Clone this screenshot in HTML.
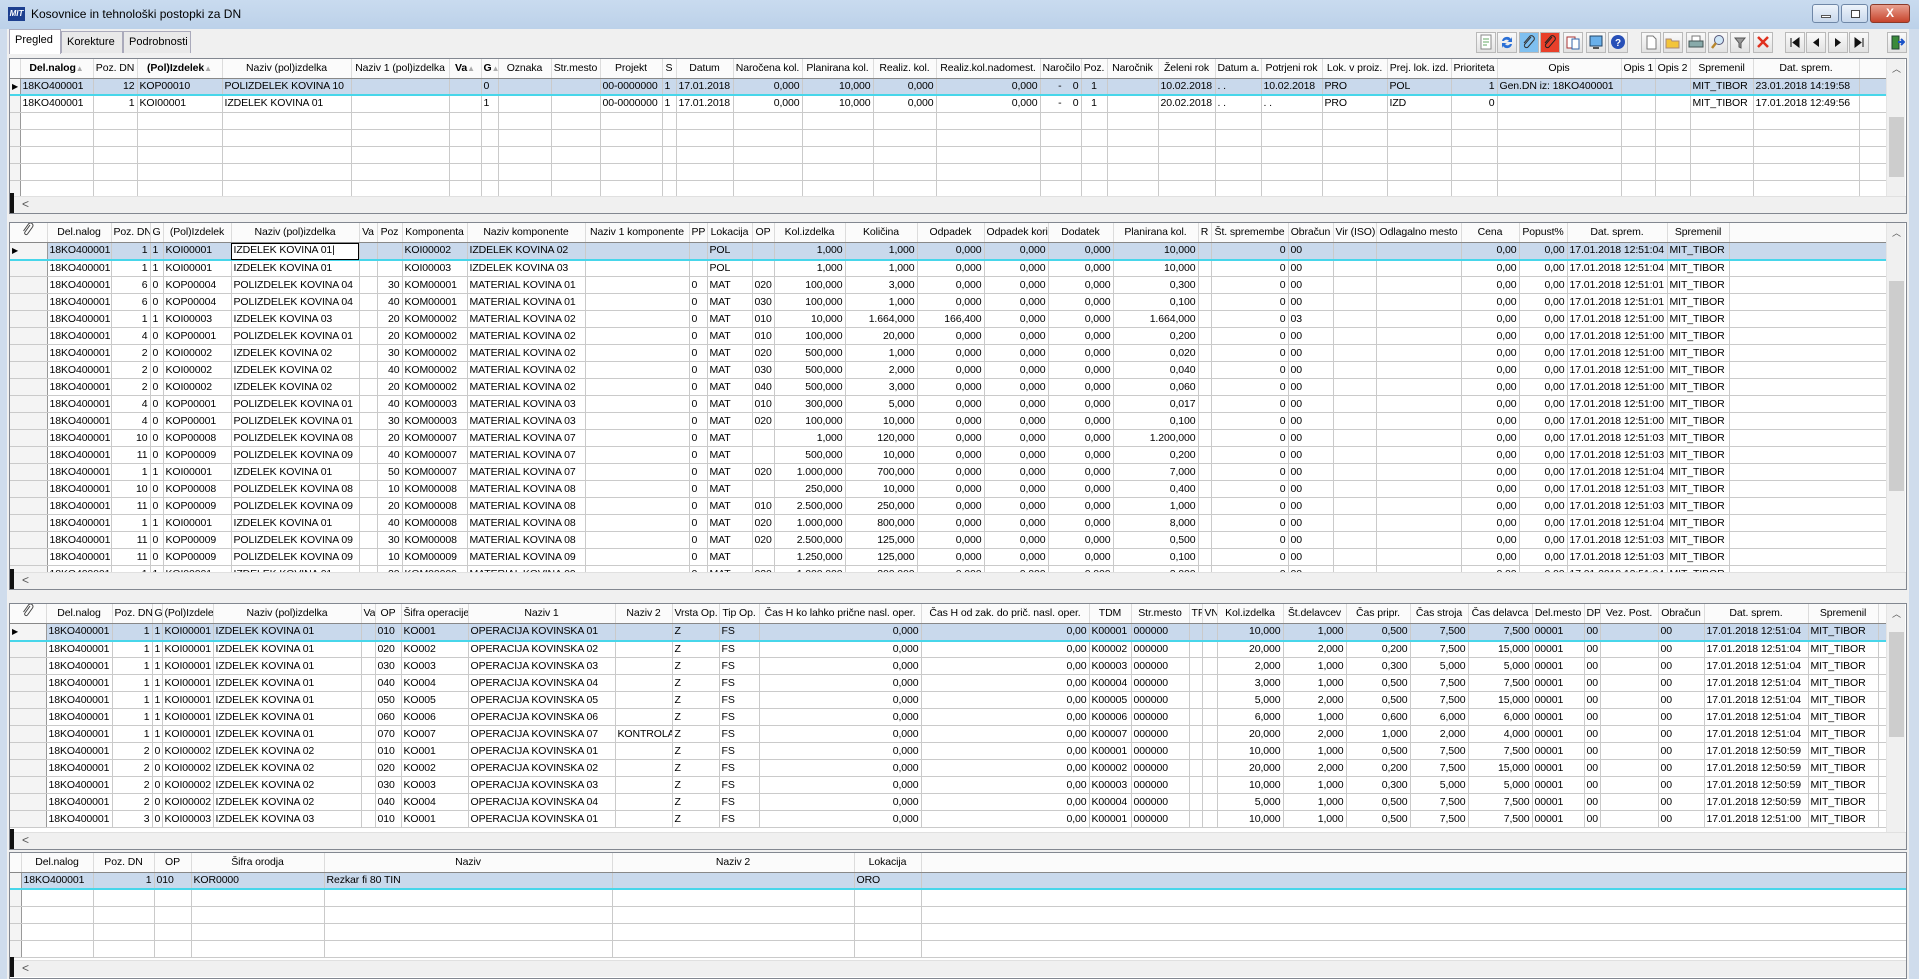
<!DOCTYPE html>
<html><head><meta charset="utf-8">
<style>
*{box-sizing:border-box}
body{margin:0;width:1919px;height:979px;overflow:hidden;background:#cfdcec;font-family:"Liberation Sans",sans-serif;position:relative}
.title{position:absolute;left:0;top:0;width:1919px;height:29px;background:linear-gradient(#c9dbef,#bcd1e9);}
.title .t{position:absolute;left:31px;top:7px;font-size:12px;color:#000}
.logo{position:absolute;left:8px;top:7px;width:17px;height:14px;background:#1d3f8f;color:#fff;font:bold 8px "Liberation Sans";line-height:14px;text-align:center;font-style:italic}
.wb{position:absolute;top:4px;height:19px;border:1px solid #6f87a7;border-radius:3px;background:linear-gradient(#eef4fb,#c8d8ec)}
.client{position:absolute;left:7px;top:29px;width:1902px;height:950px;background:#f0f0f0}
.tab{position:absolute;top:31px;height:22px;font-size:11px;padding:4px 5px;border:1px solid #aab;border-bottom:none;background:#e9e9e9}
.tab.a{background:#fff;top:29px;height:25px}
.tb{position:absolute;top:32px;width:20px;height:21px;border:1px solid #b9b9b9;background:linear-gradient(#fafafa,#e2e2e2)}
.tb svg{position:absolute;left:1px;top:1px}
.g{position:absolute;background:#fff;border:1px solid #828790;overflow:hidden}
table{border-collapse:collapse;table-layout:fixed;font-size:10.5px;letter-spacing:-0.1px;position:absolute;left:0;top:0}
td,th{height:17px;padding:0 2px;border-right:1px solid #cacaca;border-bottom:1px solid #cacaca;white-space:nowrap;overflow:hidden;line-height:15px;color:#000}
th{height:19px;font-weight:normal;background:#fbfbfb;border-right:1px solid #dcdcdc;border-bottom:1px solid #888;text-align:center}
th b{font-weight:bold}
.tri{color:#aaa;font-size:8px}
tr.s td{background:#c9d9ec;border-bottom:2px solid #47d6ea}
td:first-child{background:#f4f4f4!important;border-right:1px solid #999}
.ed{background:#fff!important;outline:1px solid #000;outline-offset:-1px}
.hs{position:absolute;left:0;height:17px;background:#f0f0f0;border-top:1px solid #e0e0e0;font-size:12px;color:#555;padding-left:12px;line-height:15px}
.hs:before{content:"";position:absolute;left:0;top:-4px;width:4px;height:20px;background:#111}
.vs{position:absolute;width:19px;background:#f0f0f0;border-left:1px solid #e4e4e4}
.vs .th{position:absolute;left:2px;width:15px;background:#cdcdcd}
.vs .ar{position:absolute;top:3px;left:5px;font-size:9px;color:#555}
#t1 td:nth-child(3),#t1 td:nth-child(14),#t1 td:nth-child(15),#t1 td:nth-child(16),#t1 td:nth-child(17),#t1 td:nth-child(18),#t1 td:nth-child(26){text-align:right}
#t1 td:nth-child(19){text-align:center}
#t2 td:nth-child(3),#t2 td:nth-child(8),#t2 td:nth-child(15),#t2 td:nth-child(16),#t2 td:nth-child(17),#t2 td:nth-child(18),#t2 td:nth-child(19),#t2 td:nth-child(20),#t2 td:nth-child(22),#t2 td:nth-child(26),#t2 td:nth-child(27){text-align:right}
#t3 td:nth-child(3),#t3 td:nth-child(14),#t3 td:nth-child(15),#t3 td:nth-child(20),#t3 td:nth-child(21),#t3 td:nth-child(22),#t3 td:nth-child(23),#t3 td:nth-child(24){text-align:right}
#t4 td:nth-child(3){text-align:right}
.mk{font-size:8px}
</style></head><body>
<div class="title"><div class="logo">MIT</div><div class="t">Kosovnice in tehnološki postopki za DN</div>
<div class="wb" style="left:1812px;width:27px"><div style="position:absolute;left:8px;top:10px;width:10px;height:3px;background:#fff;border:1px solid #555"></div></div>
<div class="wb" style="left:1841px;width:27px"><div style="position:absolute;left:9px;top:5px;width:9px;height:8px;border:1px solid #444;background:#fff"></div></div>
<div class="wb" style="left:1870px;width:40px;background:linear-gradient(#e8a090,#c7442c);border-color:#8a3a2a;color:#fff;font:bold 12px 'Liberation Sans';text-align:center;line-height:17px">X</div>
</div>
<div class="client"></div>
<div class="tab a" style="left:9px;width:52px">Pregled</div>
<div class="tab" style="left:61px;width:62px">Korekture</div>
<div class="tab" style="left:123px;width:68px">Podrobnosti</div>

<div class="tb" style="left:1476px"><svg width="16" height="17"><rect x="3" y="1" width="10" height="14" fill="#fff" stroke="#888"/><path d="M5 5h6M5 8h6M5 11h4" stroke="#6a6"/></svg></div>
<div class="tb" style="left:1497px"><svg width="16" height="17"><path d="M3 7a5 5 0 0 1 9-2l1-2v5h-5l2-1a3 3 0 0 0-5 0z" fill="#2a6fd6"/><path d="M13 10a5 5 0 0 1-9 2l-1 2v-5h5l-2 1a3 3 0 0 0 5 0z" fill="#2a6fd6"/></svg></div>
<div class="tb" style="left:1519px;background:#7fc0f0"><svg width="16" height="17"><path d="M10 3l-6 7a2 2 0 0 0 3 3l6-7a3 3 0 0 0-4-4l-6 7" stroke="#333" fill="none"/></svg></div>
<div class="tb" style="left:1540px;background:#e8402a"><svg width="16" height="17"><path d="M10 3l-6 7a2 2 0 0 0 3 3l6-7a3 3 0 0 0-4-4l-6 7" stroke="#222" fill="none"/></svg></div>
<div class="tb" style="left:1563px"><svg width="16" height="17"><rect x="2" y="3" width="8" height="11" fill="#fff" stroke="#a33"/><rect x="7" y="5" width="7" height="10" fill="#fff" stroke="#36a"/></svg></div>
<div class="tb" style="left:1586px"><svg width="16" height="17"><rect x="2" y="2" width="12" height="10" fill="#6ab0ea" stroke="#246"/><rect x="5" y="13" width="6" height="2" fill="#555"/></svg></div>
<div class="tb" style="left:1608px"><svg width="16" height="17"><circle cx="8" cy="8" r="7" fill="#2850b8"/><text x="5" y="12" fill="#fff" font-size="10" font-weight="bold" font-family="Liberation Sans">?</text></svg></div>
<div class="tb" style="left:1641px"><svg width="16" height="17"><path d="M4 2h6l3 3v10H4z" fill="#fff" stroke="#777"/></svg></div>
<div class="tb" style="left:1663px"><svg width="16" height="17"><path d="M1 5h5l1 2h7v7H1z" fill="#f2c43a" stroke="#a87"/></svg></div>
<div class="tb" style="left:1686px"><svg width="16" height="17"><rect x="4" y="2" width="8" height="5" fill="#fff" stroke="#777"/><rect x="1" y="7" width="14" height="6" fill="#8aa" stroke="#455"/></svg></div>
<div class="tb" style="left:1708px"><svg width="16" height="17"><circle cx="9" cy="6" r="4.5" fill="#cfe6f7" stroke="#557"/><path d="M6 9l-4 5" stroke="#b8862b" stroke-width="2.5"/></svg></div>
<div class="tb" style="left:1730px"><svg width="16" height="17"><path d="M3 4h10l-4 5v5l-2-1V9z" fill="#999" stroke="#555"/></svg></div>
<div class="tb" style="left:1753px"><svg width="16" height="17"><path d="M3 3l10 10M13 3L3 13" stroke="#e0301e" stroke-width="2.5"/></svg></div>
<div class="tb" style="left:1785px"><svg width="16" height="17"><path d="M4 4v9M12 4v9L6 8.5z" stroke="#111" fill="#111"/></svg></div>
<div class="tb" style="left:1806px"><svg width="16" height="17"><path d="M11 4v9L5 8.5z" fill="#111"/></svg></div>
<div class="tb" style="left:1828px"><svg width="16" height="17"><path d="M5 4v9l6-4.5z" fill="#111"/></svg></div>
<div class="tb" style="left:1849px"><svg width="16" height="17"><path d="M4 4v9l6-4.5zM12 4v9" stroke="#111" fill="#111"/></svg></div>
<div class="tb" style="left:1887px"><svg width="16" height="17"><rect x="3" y="2" width="7" height="13" fill="#3a8a3a" stroke="#243"/><path d="M9 8h6M12 5l3 3-3 3" stroke="#1a52c8" stroke-width="2" fill="none"/></svg></div>

<!-- GRID 1 -->
<div class="g" style="left:9px;top:58px;width:1898px;height:156px">
<table id="t1" style="width:1876px">
<colgroup><col style="width:10px"><col style="width:73px"><col style="width:44px"><col style="width:85px"><col style="width:129px"><col style="width:98px"><col style="width:32px"><col style="width:17px"><col style="width:53px"><col style="width:49px"><col style="width:62px"><col style="width:14px"><col style="width:57px"><col style="width:69px"><col style="width:71px"><col style="width:63px"><col style="width:104px"><col style="width:41px"><col style="width:26px"><col style="width:51px"><col style="width:57px"><col style="width:46px"><col style="width:61px"><col style="width:65px"><col style="width:64px"><col style="width:46px"><col style="width:124px"><col style="width:34px"><col style="width:35px"><col style="width:63px"><col style="width:106px"><col style="width:27px"></colgroup>
<tr><th></th><th><b>Del.nalog</b><span class="tri">▲</span></th><th>Poz. DN</th><th><b>(Pol)Izdelek</b><span class="tri">▲</span></th><th>Naziv (pol)izdelka</th><th>Naziv 1 (pol)izdelka</th><th><b>Va</b><span class="tri">▲</span></th><th><b>G</b><span class="tri">▲</span></th><th>Oznaka</th><th>Str.mesto</th><th>Projekt</th><th>S</th><th>Datum</th><th>Naročena kol.</th><th>Planirana kol.</th><th>Realiz. kol.</th><th>Realiz.kol.nadomest.</th><th>Naročilo</th><th>Poz.</th><th>Naročnik</th><th>Želeni rok</th><th>Datum a.</th><th>Potrjeni rok</th><th>Lok. v proiz.</th><th>Prej. lok. izd.</th><th>Prioriteta</th><th>Opis</th><th>Opis 1</th><th>Opis 2</th><th>Spremenil</th><th>Dat. sprem.</th><th></th></tr>
<tr class="s"><td class="mk">▶</td><td>18KO400001<td>12<td>KOP00010<td>POLIZDELEK KOVINA 10<td><td><td>0<td><td><td>00-0000000<td>1<td>17.01.2018<td>0,000<td>10,000<td>0,000<td>0,000<td>-&nbsp;&nbsp;&nbsp;&nbsp;0<td>1<td><td>10.02.2018<td>. .<td>10.02.2018<td>PRO<td>POL<td>1<td>Gen.DN iz: 18KO400001<td><td><td>MIT_TIBOR<td>23.01.2018 14:19:58<td></tr>
<tr><td></td><td>18KO400001<td>1<td>KOI00001<td>IZDELEK KOVINA 01<td><td><td>1<td><td><td>00-0000000<td>1<td>17.01.2018<td>0,000<td>10,000<td>0,000<td>0,000<td>-&nbsp;&nbsp;&nbsp;&nbsp;0<td>1<td><td>20.02.2018<td>. .<td>. .<td>PRO<td>IZD<td>0<td><td><td><td>MIT_TIBOR<td>17.01.2018 12:49:56<td></tr>
<tr><td></td><td><td><td><td><td><td><td><td><td><td><td><td><td><td><td><td><td><td><td><td><td><td><td><td><td><td><td><td><td><td><td><td></tr>
<tr><td></td><td><td><td><td><td><td><td><td><td><td><td><td><td><td><td><td><td><td><td><td><td><td><td><td><td><td><td><td><td><td><td><td></tr>
<tr><td></td><td><td><td><td><td><td><td><td><td><td><td><td><td><td><td><td><td><td><td><td><td><td><td><td><td><td><td><td><td><td><td><td></tr>
<tr><td></td><td><td><td><td><td><td><td><td><td><td><td><td><td><td><td><td><td><td><td><td><td><td><td><td><td><td><td><td><td><td><td><td></tr>
<tr><td></td><td><td><td><td><td><td><td><td><td><td><td><td><td><td><td><td><td><td><td><td><td><td><td><td><td><td><td><td><td><td><td><td></tr>
</table>
<div class="vs" style="left:1876px;top:0;height:137px"><span class="ar">︿</span><div class="th" style="top:58px;height:60px"></div></div>
<div class="hs" style="top:137px;width:1896px">&lt;</div>
</div>

<!-- GRID 2 -->
<div class="g" style="left:9px;top:222px;width:1898px;height:368px">
<table id="t2" style="width:1876px">
<colgroup><col style="width:37px"><col style="width:64px"><col style="width:39px"><col style="width:13px"><col style="width:68px"><col style="width:128px"><col style="width:18px"><col style="width:25px"><col style="width:65px"><col style="width:118px"><col style="width:104px"><col style="width:18px"><col style="width:45px"><col style="width:22px"><col style="width:71px"><col style="width:72px"><col style="width:67px"><col style="width:64px"><col style="width:65px"><col style="width:85px"><col style="width:13px"><col style="width:77px"><col style="width:45px"><col style="width:43px"><col style="width:85px"><col style="width:58px"><col style="width:48px"><col style="width:100px"><col style="width:62px"><col style="width:157px"></colgroup>
<tr><th><svg width="12" height="14"><path d="M8 2l-5 7a1.6 1.6 0 0 0 2.5 2l5-7a2.5 2.5 0 0 0-4-3l-5 7" stroke="#444" fill="none"/></svg></th><th>Del.nalog</th><th>Poz. DN</th><th>G</th><th>(Pol)Izdelek</th><th>Naziv (pol)izdelka</th><th>Va</th><th>Poz</th><th>Komponenta</th><th>Naziv komponente</th><th>Naziv 1 komponente</th><th>PP</th><th>Lokacija</th><th>OP</th><th>Kol.izdelka</th><th>Količina</th><th>Odpadek</th><th>Odpadek korist.</th><th>Dodatek</th><th>Planirana kol.</th><th>R</th><th>Št. spremembe</th><th>Obračun</th><th>Vir (ISO)</th><th>Odlagalno mesto</th><th>Cena</th><th>Popust%</th><th>Dat. sprem.</th><th>Spremenil</th><th></th></tr>
<tr class="s"><td class="mk">▶</td><td>18KO400001<td>1<td>1<td>KOI00001<td class="ed">IZDELEK KOVINA 01|<td><td><td>KOI00002<td>IZDELEK KOVINA 02<td><td><td>POL<td><td>1,000<td>1,000<td>0,000<td>0,000<td>0,000<td>10,000<td><td>0<td>00<td><td><td>0,00<td>0,00<td>17.01.2018 12:51:04<td>MIT_TIBOR<td></tr>
<tr><td></td><td>18KO400001<td>1<td>1<td>KOI00001<td>IZDELEK KOVINA 01<td><td><td>KOI00003<td>IZDELEK KOVINA 03<td><td><td>POL<td><td>1,000<td>1,000<td>0,000<td>0,000<td>0,000<td>10,000<td><td>0<td>00<td><td><td>0,00<td>0,00<td>17.01.2018 12:51:04<td>MIT_TIBOR<td></tr>
<tr><td></td><td>18KO400001<td>6<td>0<td>KOP00004<td>POLIZDELEK KOVINA 04<td><td>30<td>KOM00001<td>MATERIAL KOVINA 01<td><td>0<td>MAT<td>020<td>100,000<td>3,000<td>0,000<td>0,000<td>0,000<td>0,300<td><td>0<td>00<td><td><td>0,00<td>0,00<td>17.01.2018 12:51:01<td>MIT_TIBOR<td></tr>
<tr><td></td><td>18KO400001<td>6<td>0<td>KOP00004<td>POLIZDELEK KOVINA 04<td><td>40<td>KOM00001<td>MATERIAL KOVINA 01<td><td>0<td>MAT<td>030<td>100,000<td>1,000<td>0,000<td>0,000<td>0,000<td>0,100<td><td>0<td>00<td><td><td>0,00<td>0,00<td>17.01.2018 12:51:01<td>MIT_TIBOR<td></tr>
<tr><td></td><td>18KO400001<td>1<td>1<td>KOI00003<td>IZDELEK KOVINA 03<td><td>20<td>KOM00002<td>MATERIAL KOVINA 02<td><td>0<td>MAT<td>010<td>10,000<td>1.664,000<td>166,400<td>0,000<td>0,000<td>1.664,000<td><td>0<td>03<td><td><td>0,00<td>0,00<td>17.01.2018 12:51:00<td>MIT_TIBOR<td></tr>
<tr><td></td><td>18KO400001<td>4<td>0<td>KOP00001<td>POLIZDELEK KOVINA 01<td><td>20<td>KOM00002<td>MATERIAL KOVINA 02<td><td>0<td>MAT<td>010<td>100,000<td>20,000<td>0,000<td>0,000<td>0,000<td>0,200<td><td>0<td>00<td><td><td>0,00<td>0,00<td>17.01.2018 12:51:00<td>MIT_TIBOR<td></tr>
<tr><td></td><td>18KO400001<td>2<td>0<td>KOI00002<td>IZDELEK KOVINA 02<td><td>30<td>KOM00002<td>MATERIAL KOVINA 02<td><td>0<td>MAT<td>020<td>500,000<td>1,000<td>0,000<td>0,000<td>0,000<td>0,020<td><td>0<td>00<td><td><td>0,00<td>0,00<td>17.01.2018 12:51:00<td>MIT_TIBOR<td></tr>
<tr><td></td><td>18KO400001<td>2<td>0<td>KOI00002<td>IZDELEK KOVINA 02<td><td>40<td>KOM00002<td>MATERIAL KOVINA 02<td><td>0<td>MAT<td>030<td>500,000<td>2,000<td>0,000<td>0,000<td>0,000<td>0,040<td><td>0<td>00<td><td><td>0,00<td>0,00<td>17.01.2018 12:51:00<td>MIT_TIBOR<td></tr>
<tr><td></td><td>18KO400001<td>2<td>0<td>KOI00002<td>IZDELEK KOVINA 02<td><td>20<td>KOM00002<td>MATERIAL KOVINA 02<td><td>0<td>MAT<td>040<td>500,000<td>3,000<td>0,000<td>0,000<td>0,000<td>0,060<td><td>0<td>00<td><td><td>0,00<td>0,00<td>17.01.2018 12:51:00<td>MIT_TIBOR<td></tr>
<tr><td></td><td>18KO400001<td>4<td>0<td>KOP00001<td>POLIZDELEK KOVINA 01<td><td>40<td>KOM00003<td>MATERIAL KOVINA 03<td><td>0<td>MAT<td>010<td>300,000<td>5,000<td>0,000<td>0,000<td>0,000<td>0,017<td><td>0<td>00<td><td><td>0,00<td>0,00<td>17.01.2018 12:51:00<td>MIT_TIBOR<td></tr>
<tr><td></td><td>18KO400001<td>4<td>0<td>KOP00001<td>POLIZDELEK KOVINA 01<td><td>30<td>KOM00003<td>MATERIAL KOVINA 03<td><td>0<td>MAT<td>020<td>100,000<td>10,000<td>0,000<td>0,000<td>0,000<td>0,100<td><td>0<td>00<td><td><td>0,00<td>0,00<td>17.01.2018 12:51:00<td>MIT_TIBOR<td></tr>
<tr><td></td><td>18KO400001<td>10<td>0<td>KOP00008<td>POLIZDELEK KOVINA 08<td><td>20<td>KOM00007<td>MATERIAL KOVINA 07<td><td>0<td>MAT<td><td>1,000<td>120,000<td>0,000<td>0,000<td>0,000<td>1.200,000<td><td>0<td>00<td><td><td>0,00<td>0,00<td>17.01.2018 12:51:03<td>MIT_TIBOR<td></tr>
<tr><td></td><td>18KO400001<td>11<td>0<td>KOP00009<td>POLIZDELEK KOVINA 09<td><td>40<td>KOM00007<td>MATERIAL KOVINA 07<td><td>0<td>MAT<td><td>500,000<td>10,000<td>0,000<td>0,000<td>0,000<td>0,200<td><td>0<td>00<td><td><td>0,00<td>0,00<td>17.01.2018 12:51:03<td>MIT_TIBOR<td></tr>
<tr><td></td><td>18KO400001<td>1<td>1<td>KOI00001<td>IZDELEK KOVINA 01<td><td>50<td>KOM00007<td>MATERIAL KOVINA 07<td><td>0<td>MAT<td>020<td>1.000,000<td>700,000<td>0,000<td>0,000<td>0,000<td>7,000<td><td>0<td>00<td><td><td>0,00<td>0,00<td>17.01.2018 12:51:04<td>MIT_TIBOR<td></tr>
<tr><td></td><td>18KO400001<td>10<td>0<td>KOP00008<td>POLIZDELEK KOVINA 08<td><td>10<td>KOM00008<td>MATERIAL KOVINA 08<td><td>0<td>MAT<td><td>250,000<td>10,000<td>0,000<td>0,000<td>0,000<td>0,400<td><td>0<td>00<td><td><td>0,00<td>0,00<td>17.01.2018 12:51:03<td>MIT_TIBOR<td></tr>
<tr><td></td><td>18KO400001<td>11<td>0<td>KOP00009<td>POLIZDELEK KOVINA 09<td><td>20<td>KOM00008<td>MATERIAL KOVINA 08<td><td>0<td>MAT<td>010<td>2.500,000<td>250,000<td>0,000<td>0,000<td>0,000<td>1,000<td><td>0<td>00<td><td><td>0,00<td>0,00<td>17.01.2018 12:51:03<td>MIT_TIBOR<td></tr>
<tr><td></td><td>18KO400001<td>1<td>1<td>KOI00001<td>IZDELEK KOVINA 01<td><td>40<td>KOM00008<td>MATERIAL KOVINA 08<td><td>0<td>MAT<td>020<td>1.000,000<td>800,000<td>0,000<td>0,000<td>0,000<td>8,000<td><td>0<td>00<td><td><td>0,00<td>0,00<td>17.01.2018 12:51:04<td>MIT_TIBOR<td></tr>
<tr><td></td><td>18KO400001<td>11<td>0<td>KOP00009<td>POLIZDELEK KOVINA 09<td><td>30<td>KOM00008<td>MATERIAL KOVINA 08<td><td>0<td>MAT<td>020<td>2.500,000<td>125,000<td>0,000<td>0,000<td>0,000<td>0,500<td><td>0<td>00<td><td><td>0,00<td>0,00<td>17.01.2018 12:51:03<td>MIT_TIBOR<td></tr>
<tr><td></td><td>18KO400001<td>11<td>0<td>KOP00009<td>POLIZDELEK KOVINA 09<td><td>10<td>KOM00009<td>MATERIAL KOVINA 09<td><td>0<td>MAT<td><td>1.250,000<td>125,000<td>0,000<td>0,000<td>0,000<td>0,100<td><td>0<td>00<td><td><td>0,00<td>0,00<td>17.01.2018 12:51:03<td>MIT_TIBOR<td></tr>
<tr><td></td><td>18KO400001<td>1<td>1<td>KOI00001<td>IZDELEK KOVINA 01<td><td>20<td>KOM00009<td>MATERIAL KOVINA 09<td><td>0<td>MAT<td>020<td>1.000,000<td>200,000<td>0,000<td>0,000<td>0,000<td>2,000<td><td>0<td>00<td><td><td>0,00<td>0,00<td>17.01.2018 12:51:04<td>MIT_TIBOR<td></tr>
</table>
<div class="vs" style="left:1876px;top:0;height:349px"><span class="ar">︿</span><div class="th" style="top:58px;height:210px"></div></div>
<div class="hs" style="top:349px;width:1896px">&lt;</div>
</div>

<!-- GRID 3 -->
<div class="g" style="left:9px;top:603px;width:1898px;height:247px">
<table id="t3" style="width:1876px">
<colgroup><col style="width:36px"><col style="width:66px"><col style="width:40px"><col style="width:10px"><col style="width:51px"><col style="width:148px"><col style="width:14px"><col style="width:26px"><col style="width:67px"><col style="width:147px"><col style="width:57px"><col style="width:47px"><col style="width:40px"><col style="width:162px"><col style="width:168px"><col style="width:42px"><col style="width:58px"><col style="width:13px"><col style="width:15px"><col style="width:66px"><col style="width:63px"><col style="width:64px"><col style="width:58px"><col style="width:64px"><col style="width:52px"><col style="width:16px"><col style="width:58px"><col style="width:46px"><col style="width:104px"><col style="width:70px"><col style="width:8px"></colgroup>
<tr><th><svg width="12" height="14"><path d="M8 2l-5 7a1.6 1.6 0 0 0 2.5 2l5-7a2.5 2.5 0 0 0-4-3l-5 7" stroke="#444" fill="none"/></svg></th><th>Del.nalog</th><th>Poz. DN</th><th>G</th><th>(Pol)Izdelek</th><th>Naziv (pol)izdelka</th><th>Va</th><th>OP</th><th>Šifra operacije</th><th>Naziv 1</th><th>Naziv 2</th><th>Vrsta Op.</th><th>Tip Op.</th><th>Čas H ko lahko prične nasl. oper.</th><th>Čas H od zak. do  prič. nasl. oper.</th><th>TDM</th><th>Str.mesto</th><th>TP</th><th>VN</th><th>Kol.izdelka</th><th>Št.delavcev</th><th>Čas pripr.</th><th>Čas stroja</th><th>Čas delavca</th><th>Del.mesto</th><th>DP</th><th>Vez. Post.</th><th>Obračun</th><th>Dat. sprem.</th><th>Spremenil</th><th></th></tr>
<tr class="s"><td class="mk">▶</td><td>18KO400001<td>1<td>1<td>KOI00001<td>IZDELEK KOVINA 01<td><td>010<td>KO001<td>OPERACIJA KOVINSKA 01<td><td>Z<td>FS<td>0,000<td>0,00<td>K00001<td>000000<td><td><td>10,000<td>1,000<td>0,500<td>7,500<td>7,500<td>00001<td>00<td><td>00<td>17.01.2018 12:51:04<td>MIT_TIBOR<td></tr>
<tr><td></td><td>18KO400001<td>1<td>1<td>KOI00001<td>IZDELEK KOVINA 01<td><td>020<td>KO002<td>OPERACIJA KOVINSKA 02<td><td>Z<td>FS<td>0,000<td>0,00<td>K00002<td>000000<td><td><td>20,000<td>2,000<td>0,200<td>7,500<td>15,000<td>00001<td>00<td><td>00<td>17.01.2018 12:51:04<td>MIT_TIBOR<td></tr>
<tr><td></td><td>18KO400001<td>1<td>1<td>KOI00001<td>IZDELEK KOVINA 01<td><td>030<td>KO003<td>OPERACIJA KOVINSKA 03<td><td>Z<td>FS<td>0,000<td>0,00<td>K00003<td>000000<td><td><td>2,000<td>1,000<td>0,300<td>5,000<td>5,000<td>00001<td>00<td><td>00<td>17.01.2018 12:51:04<td>MIT_TIBOR<td></tr>
<tr><td></td><td>18KO400001<td>1<td>1<td>KOI00001<td>IZDELEK KOVINA 01<td><td>040<td>KO004<td>OPERACIJA KOVINSKA 04<td><td>Z<td>FS<td>0,000<td>0,00<td>K00004<td>000000<td><td><td>3,000<td>1,000<td>0,500<td>7,500<td>7,500<td>00001<td>00<td><td>00<td>17.01.2018 12:51:04<td>MIT_TIBOR<td></tr>
<tr><td></td><td>18KO400001<td>1<td>1<td>KOI00001<td>IZDELEK KOVINA 01<td><td>050<td>KO005<td>OPERACIJA KOVINSKA 05<td><td>Z<td>FS<td>0,000<td>0,00<td>K00005<td>000000<td><td><td>5,000<td>2,000<td>0,500<td>7,500<td>15,000<td>00001<td>00<td><td>00<td>17.01.2018 12:51:04<td>MIT_TIBOR<td></tr>
<tr><td></td><td>18KO400001<td>1<td>1<td>KOI00001<td>IZDELEK KOVINA 01<td><td>060<td>KO006<td>OPERACIJA KOVINSKA 06<td><td>Z<td>FS<td>0,000<td>0,00<td>K00006<td>000000<td><td><td>6,000<td>1,000<td>0,600<td>6,000<td>6,000<td>00001<td>00<td><td>00<td>17.01.2018 12:51:04<td>MIT_TIBOR<td></tr>
<tr><td></td><td>18KO400001<td>1<td>1<td>KOI00001<td>IZDELEK KOVINA 01<td><td>070<td>KO007<td>OPERACIJA KOVINSKA 07<td>KONTROLA<td>Z<td>FS<td>0,000<td>0,00<td>K00007<td>000000<td><td><td>20,000<td>2,000<td>1,000<td>2,000<td>4,000<td>00001<td>00<td><td>00<td>17.01.2018 12:51:04<td>MIT_TIBOR<td></tr>
<tr><td></td><td>18KO400001<td>2<td>0<td>KOI00002<td>IZDELEK KOVINA 02<td><td>010<td>KO001<td>OPERACIJA KOVINSKA 01<td><td>Z<td>FS<td>0,000<td>0,00<td>K00001<td>000000<td><td><td>10,000<td>1,000<td>0,500<td>7,500<td>7,500<td>00001<td>00<td><td>00<td>17.01.2018 12:50:59<td>MIT_TIBOR<td></tr>
<tr><td></td><td>18KO400001<td>2<td>0<td>KOI00002<td>IZDELEK KOVINA 02<td><td>020<td>KO002<td>OPERACIJA KOVINSKA 02<td><td>Z<td>FS<td>0,000<td>0,00<td>K00002<td>000000<td><td><td>20,000<td>2,000<td>0,200<td>7,500<td>15,000<td>00001<td>00<td><td>00<td>17.01.2018 12:50:59<td>MIT_TIBOR<td></tr>
<tr><td></td><td>18KO400001<td>2<td>0<td>KOI00002<td>IZDELEK KOVINA 02<td><td>030<td>KO003<td>OPERACIJA KOVINSKA 03<td><td>Z<td>FS<td>0,000<td>0,00<td>K00003<td>000000<td><td><td>10,000<td>1,000<td>0,300<td>5,000<td>5,000<td>00001<td>00<td><td>00<td>17.01.2018 12:50:59<td>MIT_TIBOR<td></tr>
<tr><td></td><td>18KO400001<td>2<td>0<td>KOI00002<td>IZDELEK KOVINA 02<td><td>040<td>KO004<td>OPERACIJA KOVINSKA 04<td><td>Z<td>FS<td>0,000<td>0,00<td>K00004<td>000000<td><td><td>5,000<td>1,000<td>0,500<td>7,500<td>7,500<td>00001<td>00<td><td>00<td>17.01.2018 12:50:59<td>MIT_TIBOR<td></tr>
<tr><td></td><td>18KO400001<td>3<td>0<td>KOI00003<td>IZDELEK KOVINA 03<td><td>010<td>KO001<td>OPERACIJA KOVINSKA 01<td><td>Z<td>FS<td>0,000<td>0,00<td>K00001<td>000000<td><td><td>10,000<td>1,000<td>0,500<td>7,500<td>7,500<td>00001<td>00<td><td>00<td>17.01.2018 12:51:00<td>MIT_TIBOR<td></tr>
</table>
<div class="vs" style="left:1876px;top:0;height:228px"><span class="ar">︿</span><div class="th" style="top:28px;height:105px"></div></div>
<div class="hs" style="top:228px;width:1896px">&lt;</div>
</div>

<!-- GRID 4 -->
<div class="g" style="left:9px;top:852px;width:1898px;height:127px">
<table id="t4" style="width:1896px">
<colgroup><col style="width:11px"><col style="width:72px"><col style="width:61px"><col style="width:37px"><col style="width:133px"><col style="width:288px"><col style="width:242px"><col style="width:67px"><col style="width:985px"></colgroup>
<tr><th></th><th>Del.nalog</th><th>Poz. DN</th><th>OP</th><th>Šifra orodja</th><th>Naziv</th><th>Naziv 2</th><th>Lokacija</th><th style="border-bottom:1px solid #888"></th></tr>
<tr class="s"><td></td><td>18KO400001<td>1<td>010<td>KOR0000<td>Rezkar fi 80 TIN<td><td>ORO<td></tr>
<tr><td></td><td><td><td><td><td><td><td><td></tr>
<tr><td></td><td><td><td><td><td><td><td><td></tr>
<tr><td></td><td><td><td><td><td><td><td><td></tr>
<tr><td></td><td><td><td><td><td><td><td><td></tr>
</table>
<div class="hs" style="top:107px;width:1896px">&lt;</div>
</div>
</body></html>
